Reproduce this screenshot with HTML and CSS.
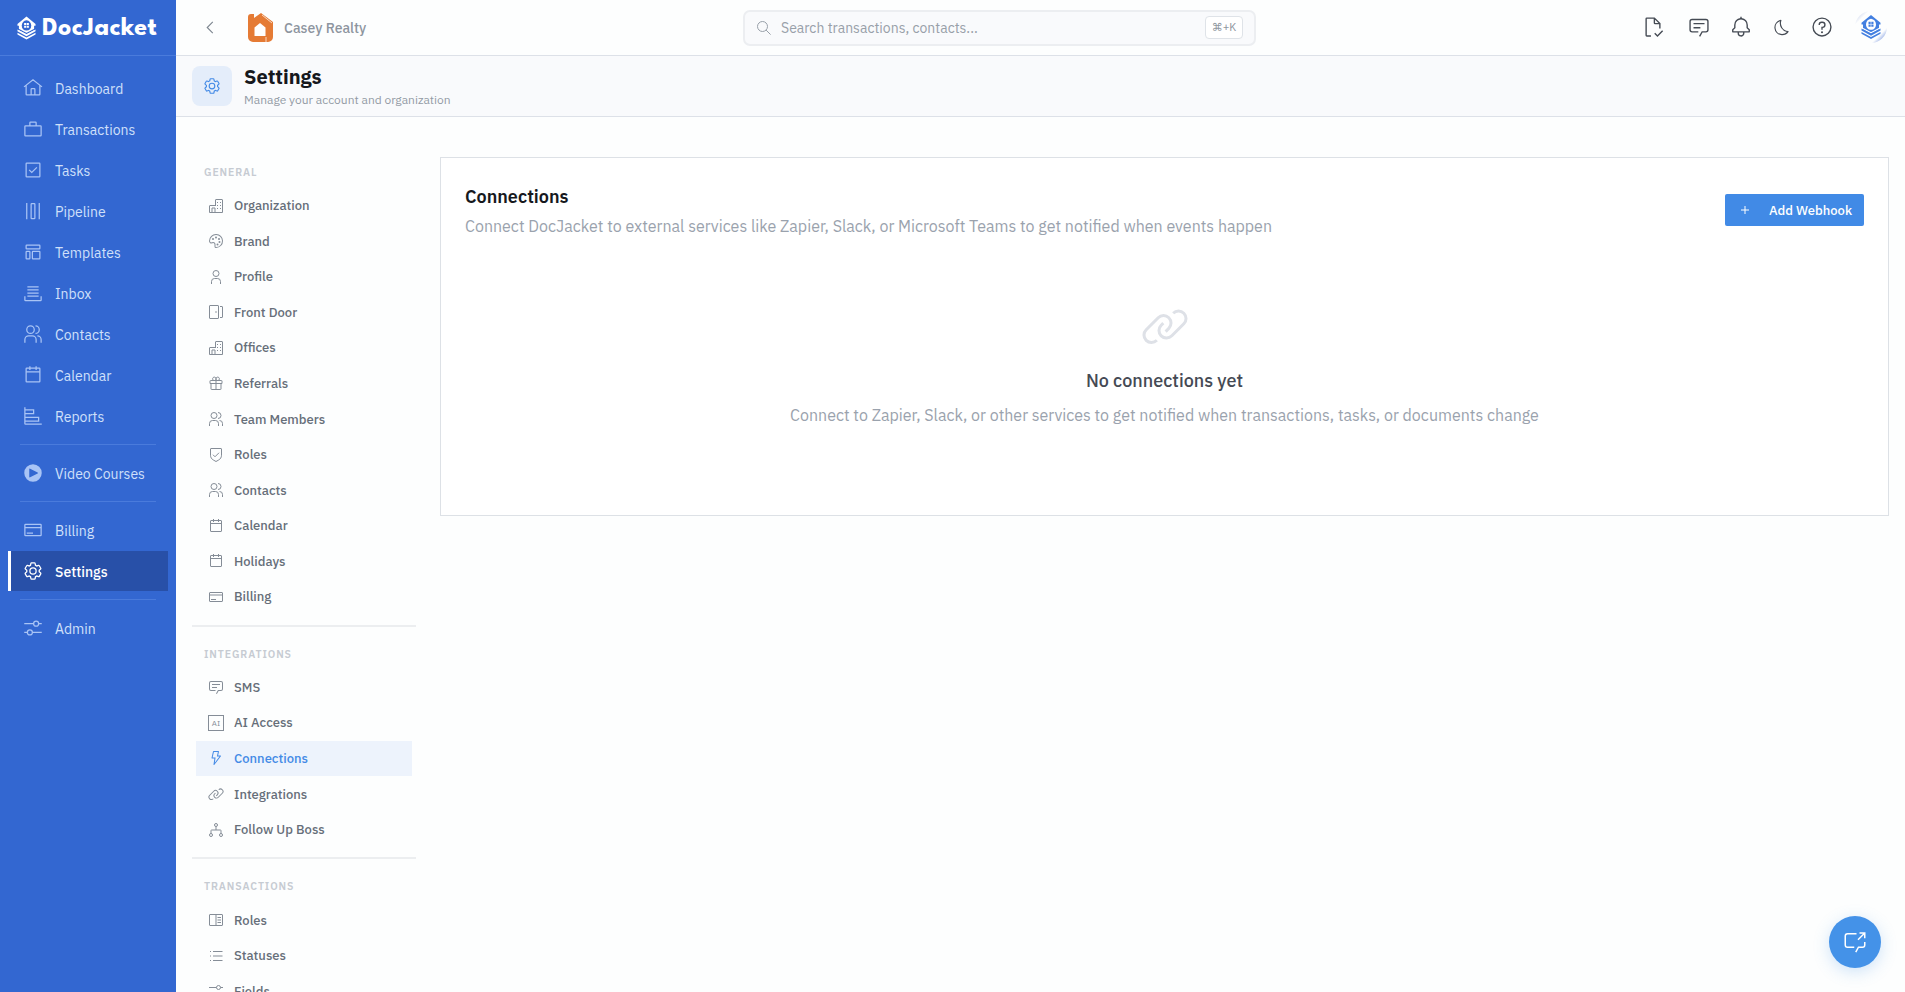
FILE: index.html
```html
<!DOCTYPE html>
<html lang="en">
<head>
<meta charset="utf-8">
<title>Settings - DocJacket</title>
<link rel="stylesheet" href="styles.css">
</head>
<body>
<svg class="sprite" aria-hidden="true">
  <symbol id="home" viewBox="0 0 32 32"><path class="s" d="M1.6 14.2 16 3l14.4 11.2M5 12v14a1 1 0 0 0 1 1h20a1 1 0 0 0 1-1V12M13 27v-9a1 1 0 0 1 1-1h4a1 1 0 0 1 1 1v9"/></symbol>
  <symbol id="case" viewBox="0 0 32 32"><path class="s" d="M4 11h24a1 1 0 0 1 1 1v14a1 1 0 0 1-1 1H4a1 1 0 0 1-1-1V12a1 1 0 0 1 1-1zM11 11V6a1 1 0 0 1 1-1h8a1 1 0 0 1 1 1v5"/></symbol>
  <symbol id="task" viewBox="0 0 32 32"><rect class="s" x="5" y="5" width="22" height="22" rx="1"/><path class="s" d="M9.8 15.8 14 19.9l8.2-8.1"/></symbol>
  <symbol id="pipe" viewBox="0 0 32 32"><path class="s" d="M6 3v26M26 3v26"/><rect class="s" x="13" y="4" width="6" height="24" rx="1"/></symbol>
  <symbol id="template" viewBox="0 0 32 32"><rect class="s" x="5" y="5" width="22" height="6" rx="1"/><rect class="s" x="5" y="15" width="6" height="12" rx="1"/><rect class="s" x="15" y="15" width="12" height="12" rx="1"/></symbol>
  <symbol id="inbox" viewBox="0 0 32 32"><path class="s" d="M7 6h18M7 11h18M7 16h18M7 21h18M3 21v6a1 1 0 0 0 1 1h24a1 1 0 0 0 1-1v-6"/></symbol>
  <symbol id="users" viewBox="0 0 32 32"><circle class="s" cx="12" cy="9" r="6"/><path class="s" d="M20 3a6 6 0 0 1 0 12M3 30v-5a6 6 0 0 1 6-6h6a6 6 0 0 1 6 6v5M23 19a6 6 0 0 1 6 6v5"/></symbol>
  <symbol id="calendar" viewBox="0 0 32 32"><rect class="s" x="5" y="5" width="22" height="22" rx="1"/><path class="s" d="M11 2v6M21 2v6M5 11h22"/></symbol>
  <symbol id="report" viewBox="0 0 32 32"><path class="s" d="M3 2v26a1 1 0 0 0 1 1h26M4 6h13v6H4M4 18h21v6H4"/></symbol>
  <symbol id="play" viewBox="0 0 32 32"><path d="M16 2a14 14 0 1 0 14 14A14 14 0 0 0 16 2Zm7.4 14.9-12 6A1 1 0 0 1 10 22V10a1 1 0 0 1 1.4-.9l12 6a1 1 0 0 1 0 1.8Z"/></symbol>
  <symbol id="card" viewBox="0 0 32 32"><rect class="s" x="3" y="7" width="26" height="18" rx="1"/><path class="s" d="M3 12h26M6 21h10"/></symbol>
  <symbol id="gear" viewBox="0 0 32 32"><path d="M27,16.76c0-.25,0-.5,0-.76s0-.51,0-.77l1.92-1.68A2,2,0,0,0,29.3,11L26.94,7a2,2,0,0,0-1.73-1,2,2,0,0,0-.64.1l-2.43.82a11.35,11.35,0,0,0-1.31-.75l-.51-2.52a2,2,0,0,0-2-1.61H13.64a2,2,0,0,0-2,1.61l-.51,2.52a11.48,11.48,0,0,0-1.32.75L7.43,6.06A2,2,0,0,0,6.79,6,2,2,0,0,0,5.06,7L2.7,11a2,2,0,0,0,.41,2.51L5,15.24c0,.25,0,.5,0,.76s0,.51,0,.77L3.11,18.45A2,2,0,0,0,2.7,21L5.06,25a2,2,0,0,0,1.73,1,2,2,0,0,0,.64-.1l2.43-.82a11.35,11.35,0,0,0,1.31.75l.51,2.52a2,2,0,0,0,2,1.61h4.72a2,2,0,0,0,2-1.61l.51-2.52a11.48,11.48,0,0,0,1.32-.75l2.42.82a2,2,0,0,0,.64.1,2,2,0,0,0,1.73-1L29.3,21a2,2,0,0,0-.41-2.51ZM25.21,24l-3.43-1.16a8.86,8.86,0,0,1-2.71,1.57L18.36,28H13.64l-.71-3.55a9.36,9.36,0,0,1-2.7-1.57L6.79,24,4.43,20l2.72-2.4a8.9,8.9,0,0,1,0-3.13L4.43,12,6.79,8l3.43,1.16a8.86,8.86,0,0,1,2.71-1.57L13.64,4h4.72l.71,3.55a9.36,9.36,0,0,1,2.7,1.57L25.21,8,27.57,12l-2.72,2.4a8.9,8.9,0,0,1,0,3.13L27.57,20Z"/><circle class="s" cx="16" cy="16" r="5"/></symbol>
  <symbol id="adjust" viewBox="0 0 32 32"><circle class="s" cx="21" cy="9" r="4"/><circle class="s" cx="11" cy="23" r="4"/><path class="s" d="M2 9h15M25 9h5M2 23h5M15 23h15"/></symbol>
  <symbol id="building" viewBox="0 0 32 32"><path class="s" d="M3 29V16a1 1 0 0 1 1-1h12M15 15V4a1 1 0 0 1 1-1h12a1 1 0 0 1 1 1v25H3M8 29v-9h6v9"/><path d="M18 8h2v2h-2zM24 8h2v2h-2zM18 14h2v2h-2zM24 14h2v2h-2zM18 20h2v2h-2zM24 20h2v2h-2z"/></symbol>
  <symbol id="palette" viewBox="0 0 32 32"><path d="M16.54,2A14,14,0,0,0,2,16a4.82,4.82,0,0,0,6.09,4.65l1.12-.31A3,3,0,0,1,13,23.24V27a3,3,0,0,0,3,3A14,14,0,0,0,30,15.46,14.05,14.05,0,0,0,16.54,2Zm8.11,22.31A11.93,11.93,0,0,1,16,28a1,1,0,0,1-1-1V23.24a5,5,0,0,0-5-5,5.07,5.07,0,0,0-1.33.18l-1.12.31A2.82,2.82,0,0,1,4,16,12,12,0,0,1,16.47,4,12.18,12.18,0,0,1,28,15.53,11.89,11.89,0,0,1,24.65,24.32Z"/><circle cx="10" cy="12" r="2"/><circle cx="16" cy="9" r="2"/><circle cx="22" cy="12" r="2"/><circle cx="23" cy="18" r="2"/><circle cx="19" cy="23" r="2"/></symbol>
  <symbol id="user" viewBox="0 0 32 32"><circle class="s" cx="16" cy="9" r="6"/><path class="s" d="M7 30v-5a6 6 0 0 1 6-6h6a6 6 0 0 1 6 6v5"/></symbol>
  <symbol id="door" viewBox="0 0 32 32"><rect class="s" x="3" y="3" width="18" height="26" rx="1"/><path class="s" d="M24 5h4a1 1 0 0 1 1 1v20a1 1 0 0 1-1 1h-4"/><circle cx="16" cy="16" r="1.6"/></symbol>
  <symbol id="gift" viewBox="0 0 32 32"><path class="s" d="M5 11h22a1 1 0 0 1 1 1v5H4v-5a1 1 0 0 1 1-1zM6 17v11a1 1 0 0 0 1 1h18a1 1 0 0 0 1-1V17M16 11v18M16 11h-4.500a3.500 3.500 0 1 1 4.500-4.500zM16 11h4.500a3.500 3.500 0 1 0-4.500-4.500z"/></symbol>
  <symbol id="shield" viewBox="0 0 32 32"><path class="s" d="M6 3h20a1 1 0 0 1 1 1v12.500c0 4.500-2.400 7.600-5.500 9.400L16 29l-5.500-3.100C7.400 24.100 5 21 5 16.500V4a1 1 0 0 1 1-1zM10 15.500l4 4 8-8"/></symbol>
  <symbol id="chat" viewBox="0 0 32 32"><path d="M17.74,30,16,29l4-7h6a2,2,0,0,0,2-2V8a2,2,0,0,0-2-2H6A2,2,0,0,0,4,8V20a2,2,0,0,0,2,2h9v2H6a4,4,0,0,1-4-4V8A4,4,0,0,1,6,4H26a4,4,0,0,1,4,4V20a4,4,0,0,1-4,4H21.16ZM8 10h16v2H8zM8 16h10v2H8z"/></symbol>
  <symbol id="bolt" viewBox="0 0 32 32"><path d="M11.61,29.92a1,1,0,0,1-.6-1.07L12.83,17H8a1,1,0,0,1-1-1.23l3-13A1,1,0,0,1,11,2H21a1,1,0,0,1,.78.37,1,1,0,0,1,.2.85L20.25,11H25a1,1,0,0,1,.9.56,1,1,0,0,1-.11,1l-13,17A1,1,0,0,1,12,30,1.09,1.09,0,0,1,11.61,29.92ZM17.75,13l2-9H11.8L9.26,15h5.91L13.58,25.28,23,13Z"/></symbol>
  <symbol id="link" viewBox="0 0 32 32"><path d="M29.25,6.76a6,6,0,0,0-8.5,0l1.42,1.42a4,4,0,1,1,5.67,5.67l-8,8a4,4,0,1,1-5.67-5.66l1.41-1.42-1.41-1.42-1.42,1.42a6,6,0,0,0,0,8.5A6,6,0,0,0,17,25a6,6,0,0,0,4.27-1.76l8-8A6,6,0,0,0,29.25,6.76ZM4.19,24.82a4,4,0,0,1,0-5.67l8-8a4,4,0,0,1,5.67,0A3.94,3.94,0,0,1,19,14a4,4,0,0,1-1.17,2.85L15.71,19l1.42,1.42,2.12-2.12a6,6,0,0,0-8.51-8.51l-8,8a6,6,0,0,0,0,8.51A6,6,0,0,0,7,28a6.07,6.07,0,0,0,4.28-1.76L9.86,24.82A4,4,0,0,1,4.19,24.82Z"/></symbol>
  <symbol id="tree" viewBox="0 0 32 32"><circle class="s" cx="16" cy="6" r="3"/><circle class="s" cx="6" cy="26" r="3"/><circle class="s" cx="26" cy="26" r="3"/><path class="s" d="M16 9v7M6 23v-6a1 1 0 0 1 1-1h18a1 1 0 0 1 1 1v6"/></symbol>
  <symbol id="book" viewBox="0 0 32 32"><rect class="s" x="3" y="5" width="26" height="22" rx="1"/><path class="s" d="M16 5v22M19 11h7M19 16h7M19 21h7"/></symbol>
  <symbol id="list" viewBox="0 0 32 32"><path class="s" d="M10 7h19M10 16h19M10 25h19M4 7h2M4 16h2M4 25h2"/></symbol>
  <symbol id="doc" viewBox="0 0 32 32"><path class="s" d="M13 29H7a1 1 0 0 1-1-1V4a1 1 0 0 1 1-1h11l8 8v7M18 3v7a1 1 0 0 0 1 1h7M18.500 25l4 4 7.500-7.500"/></symbol>
  <symbol id="bell" viewBox="0 0 32 32"><path d="M28.7071,19.293,26,16.5859V13a10.0136,10.0136,0,0,0-9-9.9492V1H15V3.0508A10.0136,10.0136,0,0,0,6,13v3.5859L3.2929,19.293A1,1,0,0,0,3,20v3a1,1,0,0,0,1,1h7v.7768a5.152,5.152,0,0,0,4.5,5.1987A5.0057,5.0057,0,0,0,21,25V24h7a1,1,0,0,0,1-1V20A1,1,0,0,0,28.7071,19.293ZM19,25a3,3,0,0,1-6,0V24h6Zm8-3H5V20.4141L7.707,17.707A1,1,0,0,0,8,17V13a8,8,0,0,1,16,0v4a1,1,0,0,0,.293.707L27,20.4141Z"/></symbol>
  <symbol id="moon" viewBox="0 0 32 32"><path d="M13.5025,5.4136A15.0755,15.0755,0,0,0,25.096,23.6082a11.1134,11.1134,0,0,1-7.9749,3.3893c-.1385,0-.2782.0051-.4178,0A11.0944,11.0944,0,0,1,13.5025,5.4136M14.98,3a1.0024,1.0024,0,0,0-.1746.0156A13.0959,13.0959,0,0,0,16.63,28.9973c.1641.006.3282,0,.4909,0a13.0724,13.0724,0,0,0,10.702-5.5556,1.0094,1.0094,0,0,0-.7833-1.5644A13.08,13.08,0,0,1,15.8892,4.38,1.0149,1.0149,0,0,0,14.98,3Z"/></symbol>
  <symbol id="help" viewBox="0 0 32 32"><circle class="s" cx="16" cy="16" r="13"/><path class="s" d="M12 13v-.5A3.500 3.500 0 0 1 15.500 9h1a3.500 3.500 0 0 1 0 7.500H16V20"/><circle cx="16" cy="23.500" r="1.500"/></symbol>
  <symbol id="search" viewBox="0 0 32 32"><circle class="s" cx="13" cy="13" r="10"/><path class="s" d="m20.200 20.200 9 9"/></symbol>
  <symbol id="launch" viewBox="0 0 32 32"><path class="s" d="M15 23H6a3 3 0 0 1-3-3V8a3 3 0 0 1 3-3h12M17 29.500l3.600-6.500H26a3 3 0 0 0 3-3v-4M22 4h7v7M29 4l-9 9"/></symbol>
  <symbol id="mark" viewBox="0 0 40 48"><path d="M20 0 39 15.500v3.500h-3v11l-16 9-16-9V19H1v-3.500z"/><path class="hole" d="M20 7.500a12 12 0 0 1 10 11c0 7-4 11-10 11S10 25.500 10 18.500a12 12 0 0 1 10-11z"/><path d="M15 13.500h4.400v4.400H15zM20.600 13.500H25v4.400h-4.400zM15 19.100h4.400v4.400H15zM20.600 19.100H25v4.400h-4.400z"/><path class="gap" d="M0 25 20 35.500 40 25M0 32.500 20 43l20-10.500"/><path d="M1 27 20 37l19-10v4L20 41.500 1 31zM1 34l19 10 19-10v3.500L20 48 1 37.500z"/></symbol>
</svg>
<div class="app">
  <aside class="sidebar">
    <div class="brand"><svg class="brand-mark"><use href="#mark"/></svg><span class="brand-name">DocJacket</span></div>
    <nav class="nav">
      <a class="nav-item"><svg><use href="#home"/></svg><span>Dashboard</span></a>
      <a class="nav-item"><svg><use href="#case"/></svg><span>Transactions</span></a>
      <a class="nav-item"><svg><use href="#task"/></svg><span>Tasks</span></a>
      <a class="nav-item"><svg><use href="#pipe"/></svg><span>Pipeline</span></a>
      <a class="nav-item"><svg><use href="#template"/></svg><span>Templates</span></a>
      <a class="nav-item"><svg><use href="#inbox"/></svg><span>Inbox</span></a>
      <a class="nav-item"><svg><use href="#users"/></svg><span>Contacts</span></a>
      <a class="nav-item"><svg><use href="#calendar"/></svg><span>Calendar</span></a>
      <a class="nav-item"><svg><use href="#report"/></svg><span>Reports</span></a>
      <hr class="nav-rule">
      <a class="nav-item"><svg><use href="#play"/></svg><span>Video Courses</span></a>
      <hr class="nav-rule">
      <a class="nav-item"><svg><use href="#card"/></svg><span>Billing</span></a>
      <a class="nav-item active"><svg><use href="#gear"/></svg><span>Settings</span></a>
      <hr class="nav-rule">
      <a class="nav-item"><svg><use href="#adjust"/></svg><span>Admin</span></a>
    </nav>
  </aside>
  <div class="main">
    <header class="topbar">
      <div class="org">
        <svg class="back" viewBox="0 0 8 14"><path d="M7 1 1 7l6 6"/></svg>
        <svg class="org-logo" viewBox="0 0 25 29"><path fill="#e57b35" d="M0 4a3 3 0 0 1 3-3h3v4l7-5 12 9v15a5 5 0 0 1-5 5H5a5 5 0 0 1-5-5z"/><path fill="#fff" d="M12 10l5.500 4.500V23h-11v-8.500z"/><path stroke="#fff" stroke-width=".7" fill="none" d="m14 2 10 8M18 24v5"/></svg>
        <span class="org-name">Casey Realty</span>
      </div>
      <div class="search"><svg><use href="#search"/></svg><span class="search-hint">Search transactions, contacts...</span><kbd>⌘+K</kbd></div>
      <div class="actions">
        <svg class="doc"><use href="#doc"/></svg>
        <svg><use href="#chat"/></svg>
        <svg><use href="#bell"/></svg>
        <svg class="moon"><use href="#moon"/></svg>
        <svg><use href="#help"/></svg>
        <span class="avatar"><svg><use href="#mark"/></svg></span>
      </div>
    </header>
    <section class="page-head">
      <div class="page-icon"><svg><use href="#gear"/></svg></div>
      <div class="page-title"><h1>Settings</h1><p>Manage your account and organization</p></div>
    </section>
    <div class="content">
      <nav class="subnav">
        <h2>GENERAL</h2>
        <a class="sub"><svg><use href="#building"/></svg><span>Organization</span></a>
        <a class="sub"><svg><use href="#palette"/></svg><span>Brand</span></a>
        <a class="sub"><svg><use href="#user"/></svg><span>Profile</span></a>
        <a class="sub"><svg><use href="#door"/></svg><span>Front Door</span></a>
        <a class="sub"><svg><use href="#building"/></svg><span>Offices</span></a>
        <a class="sub"><svg><use href="#gift"/></svg><span>Referrals</span></a>
        <a class="sub"><svg><use href="#users"/></svg><span>Team Members</span></a>
        <a class="sub"><svg><use href="#shield"/></svg><span>Roles</span></a>
        <a class="sub"><svg><use href="#users"/></svg><span>Contacts</span></a>
        <a class="sub"><svg><use href="#calendar"/></svg><span>Calendar</span></a>
        <a class="sub"><svg><use href="#calendar"/></svg><span>Holidays</span></a>
        <a class="sub"><svg><use href="#card"/></svg><span>Billing</span></a>
        <hr>
        <h2>INTEGRATIONS</h2>
        <a class="sub"><svg><use href="#chat"/></svg><span>SMS</span></a>
        <a class="sub"><i class="ai">AI</i><span>AI Access</span></a>
        <a class="sub current"><svg><use href="#bolt"/></svg><span>Connections</span></a>
        <a class="sub"><svg><use href="#link"/></svg><span>Integrations</span></a>
        <a class="sub"><svg><use href="#tree"/></svg><span>Follow Up Boss</span></a>
        <hr>
        <h2>TRANSACTIONS</h2>
        <a class="sub"><svg><use href="#book"/></svg><span>Roles</span></a>
        <a class="sub"><svg><use href="#list"/></svg><span>Statuses</span></a>
        <a class="sub"><svg><use href="#adjust"/></svg><span>Fields</span></a>
      </nav>
      <section class="panel">
        <div class="panel-head">
          <div class="panel-title"><h3>Connections</h3><p class="lead">Connect DocJacket to external services like Zapier, Slack, or Microsoft Teams to get notified when events happen</p></div>
          <button class="add"><svg viewBox="0 0 8 8"><path d="M4 0v8M0 4h8"/></svg><span>Add Webhook</span></button>
        </div>
        <div class="empty">
          <svg><use href="#link"/></svg>
          <h4>No connections yet</h4>
          <p class="hint">Connect to Zapier, Slack, or other services to get notified when transactions, tasks, or documents change</p>
        </div>
      </section>
    </div>
  </div>
</div>
<button class="fab"><svg><use href="#launch"/></svg></button>
</body>
</html>
```
FILE: styles.css
```css
* { box-sizing: border-box; }
body { margin: 0; font-family: "IBM Plex Sans", Roboto, "Noto Sans", sans-serif; background: #fdfefe; color: #16181d; }
h1, h2, h3, h4, p { margin: 0; }
button { font: inherit; border: 0; padding: 0; }
svg { display: block; flex: none; fill: currentColor; }
.sprite { position: absolute; width: 0; height: 0; }
.s { fill: none; stroke: currentColor; stroke-width: 2; }
.app { display: flex; height: 992px; overflow: hidden; }

.sidebar { width: 176px; flex: none; background: #3367d1; color: #d0e0fa; --cut: #3367d1; }
.brand { display: flex; align-items: center; height: 56px; padding-left: 17px; gap: 6px; border-bottom: 1px solid #4a7bdc; color: #fff; }
.brand-mark { width: 19px; height: 24px; }
.hole { fill: var(--cut); }
.gap { fill: none; stroke: var(--cut); stroke-width: 2.5; }
.brand-name { font: 700 26px/30px "League Spartan", Lato, sans-serif; letter-spacing: .4px; padding-top: 3px; }
.nav { padding: 12px 8px; }
.nav-item { display: flex; align-items: center; height: 40px; margin-bottom: 1px; padding-left: 12px; gap: 12px; border-left: 3px solid transparent; font-size: 14px; }
.nav-item span { padding-top: 1px; }
.nav-item svg { width: 20px; height: 20px; color: #a9c4f5; }
.nav-item.active { background: #2850a8; border-color: #fff; color: #fff; font-weight: 500; }
.nav-item.active svg { color: #fff; }
.nav-rule { height: 1px; border: 0; margin: 8px 12px; background: #4a7bdc; }

.main { flex: 1; min-width: 0; display: flex; flex-direction: column; }
.topbar { display: flex; align-items: center; height: 56px; border-bottom: 1px solid #dde1e8; flex: none; }
.org { width: 567px; display: flex; align-items: center; padding-left: 30px; }
.back { width: 8px; height: 13px; fill: none; stroke: #7d858f; stroke-width: 1.200; }
.org-logo { width: 25px; height: 29px; margin-left: 34px; }
.org-name { margin-left: 11px; font-size: 14px; font-weight: 500; color: #8d959f; }
.search { width: 513px; height: 36px; display: flex; align-items: center; border: 2px solid #eceef1; border-radius: 7px; background: #f9fafc; padding: 0 11px; color: #98a0a9; font-size: 14px; }
.search svg { width: 16px; height: 16px; }
.search-hint { margin-left: 9px; flex: 1; }
.search kbd { width: 38px; height: 23px; border: 1px solid #dfe3e8; border-radius: 4px; background: #fff; font: 11px/21px "IBM Plex Sans", Roboto, "DejaVu Sans", sans-serif; text-align: center; color: #8f979f; }
.actions { flex: 1; display: flex; align-items: center; justify-content: flex-end; gap: 20px; padding: 0 18px 1px 0; color: #454b54; }
.actions > svg { width: 22px; height: 22px; }
.actions > .doc { margin-right: 4px; }
.actions > .moon { width: 19px; height: 19px; }
.avatar { width: 32px; height: 32px; border-radius: 50%; display: grid; place-items: center; color: #437fe0; --cut: #fff; margin-left: 2px; background: linear-gradient(135deg, #dfe5f4 14%, #fdfefe 22%, #fdfefe 76%, #b9c9ee 84%); }
.avatar svg { width: 20px; height: 26px; }

.page-head { display: flex; height: 61px; padding: 0 16px; align-items: center; gap: 12px; background: #f9fafc; border-bottom: 1px solid #dde1e8; flex: none; }
.page-icon { width: 40px; height: 40px; border-radius: 8px; background: #e4edfa; display: grid; place-items: center; color: #438ae6; }
.page-icon svg { width: 18px; height: 18px; }
.page-title { padding-top: 3px; }
h1 { font-size: 20px; line-height: 24px; font-weight: 700; }
.page-head p { font-size: 12px; line-height: 21px; color: #939ba5; }

.content { flex: 1; min-height: 0; display: flex; padding: 28px 16px 0; gap: 24px; }
.subnav { width: 224px; flex: none; }
.subnav h2 { height: 42.800px; padding: 12px 0 0 12px; line-height: 31px; font-size: 10.500px; font-weight: 600; letter-spacing: .9px; color: #c6cbd2; }
.sub { display: flex; align-items: center; height: 35.590px; margin: 0 4px; padding-left: 12px; gap: 10px; font-size: 13px; font-weight: 500; color: #666e79; }
.sub svg, .ai { width: 16px; height: 16px; color: #858d97; }
.ai { flex: none; border: 1px solid #858d97; font: 8px/14px "IBM Plex Sans", "DejaVu Sans Mono", sans-serif; text-align: center; }
.current, .current svg { color: #438ae6; }
.current { background: #edf3fc; }
.subnav hr { height: 2px; border: 0; margin: 10px 0 0; background: #eceef0; }

.panel { flex: 1; height: 359px; margin-top: 12px; padding: 23px 24px; background: #fff; border: 1px solid #dde1e6; }
.panel-head { display: flex; justify-content: space-between; align-items: center; height: 58px; }
.panel-title { padding-top: 4px; }
h3 { font-size: 18px; line-height: 28px; font-weight: 600; }
.lead { font-size: 16px; line-height: 30px; color: #9aa2ad; }
.add { width: 139px; height: 32px; border-radius: 2px; background: #418ae6; color: #fff; display: flex; align-items: center; padding-left: 16px; gap: 20px; font-size: 13px; font-weight: 500; }
.add svg { width: 8px; height: 8px; stroke: #fff; }
.empty { display: flex; flex-direction: column; align-items: center; padding-top: 63px; }
.empty svg { width: 48px; height: 48px; color: #dee1e7; }
h4 { font-size: 18px; line-height: 28px; font-weight: 500; margin-top: 17px; color: #454a54; }
.hint { font-size: 16px; line-height: 24px; margin-top: 8px; color: #9aa2ad; }

.fab { position: fixed; right: 24px; bottom: 24px; width: 52px; height: 52px; border-radius: 50%; background: #4492e8; color: #fff; display: grid; place-items: center; box-shadow: 0 4px 16px rgba(68, 146, 232, .25); }
.fab svg { width: 24px; height: 24px; }
```
